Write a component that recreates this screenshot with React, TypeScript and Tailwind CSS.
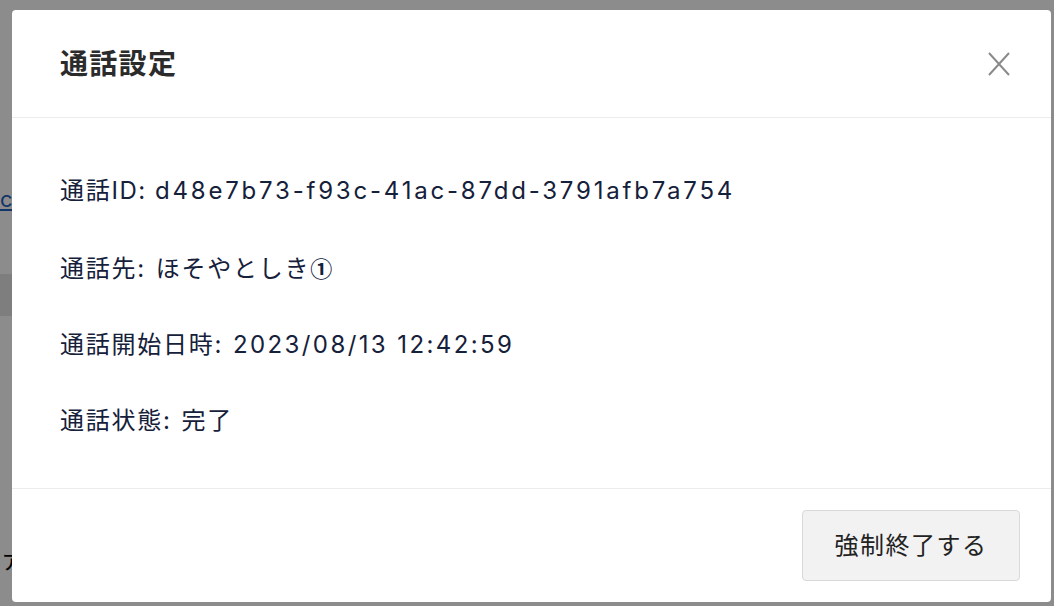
import React from "react";

const font = { fontFamily: 'Inter, "Noto Sans CJK JP", sans-serif' };
const cjk = { fontFamily: '"Noto Sans CJK JP", sans-serif' };

function J({ children }: { children: React.ReactNode }) {
  return <span className="tracking-[1.75px]">{children}</span>;
}

export default function App() {
  return (
    <div className="relative w-[1054px] h-[606px] overflow-hidden bg-white" style={font}>
      {/* background page */}
      <div className="absolute inset-0 bg-white">
        <div className="pt-[183px] pl-[0px] text-[22px] text-[#1f5fbf] underline">co</div>
        <div className="mt-[58px] h-[42px] w-[120px] bg-[#e6e6e6]" />
        <div className="mt-[226px] text-[24px] text-black">ァ</div>
      </div>
      {/* overlay */}
      <div className="absolute inset-0 bg-black/45" />
      {/* modal */}
      <div className="absolute left-[12px] top-[10px] w-[1039px] h-[592px] bg-white rounded-[4px] flex flex-col">
        <div className="h-[108px] flex items-center justify-between pl-[48px] pr-[41px] border-b border-[#ececec]">
          <h1 className="text-[28px] font-bold tracking-[1.3px] text-[#2b2b2b] leading-none">通話設定</h1>
          <button className="w-[22px] h-[24px] flex items-center justify-center">
            <svg width="22" height="24" viewBox="0 0 22 24" fill="none">
              <path d="M1 1 L21 23 M21 1 L1 23" stroke="#8a8a8a" strokeWidth="2" />
            </svg>
          </button>
        </div>
        <div className="flex-1 flex flex-col gap-[42px] pl-[48px] pt-[56px] text-[24px] tracking-[2.4px] leading-[34px] text-[#15203a]">
          <p>
            <J>通話</J>
            <span className="tracking-[1.5px]">ID: </span>
            <span className="tracking-[2.8px]">d48e7b73-f93c-41ac-87dd-3791afb7a754</span>
          </p>
          <p>
            <J>通話先</J>: <J>ほそやとしき</J>
            <span style={cjk} className="text-[22px] font-semibold tracking-normal">①</span>
          </p>
          <p><J>通話開始日時</J>: 2023/08/13 12:42:59</p>
          <p><J>通話状態</J>: <J>完了</J></p>
        </div>
        <div className="h-[114px] border-t border-[#ececec] flex items-center justify-end pr-[31px]">
          <button className="w-[218px] h-[71px] bg-[#f2f2f2] border border-[#d9d9d9] rounded-[4px] text-[24px] tracking-[1.5px] text-[#222]">
            強制終了する
          </button>
        </div>
      </div>
    </div>
  );
}
